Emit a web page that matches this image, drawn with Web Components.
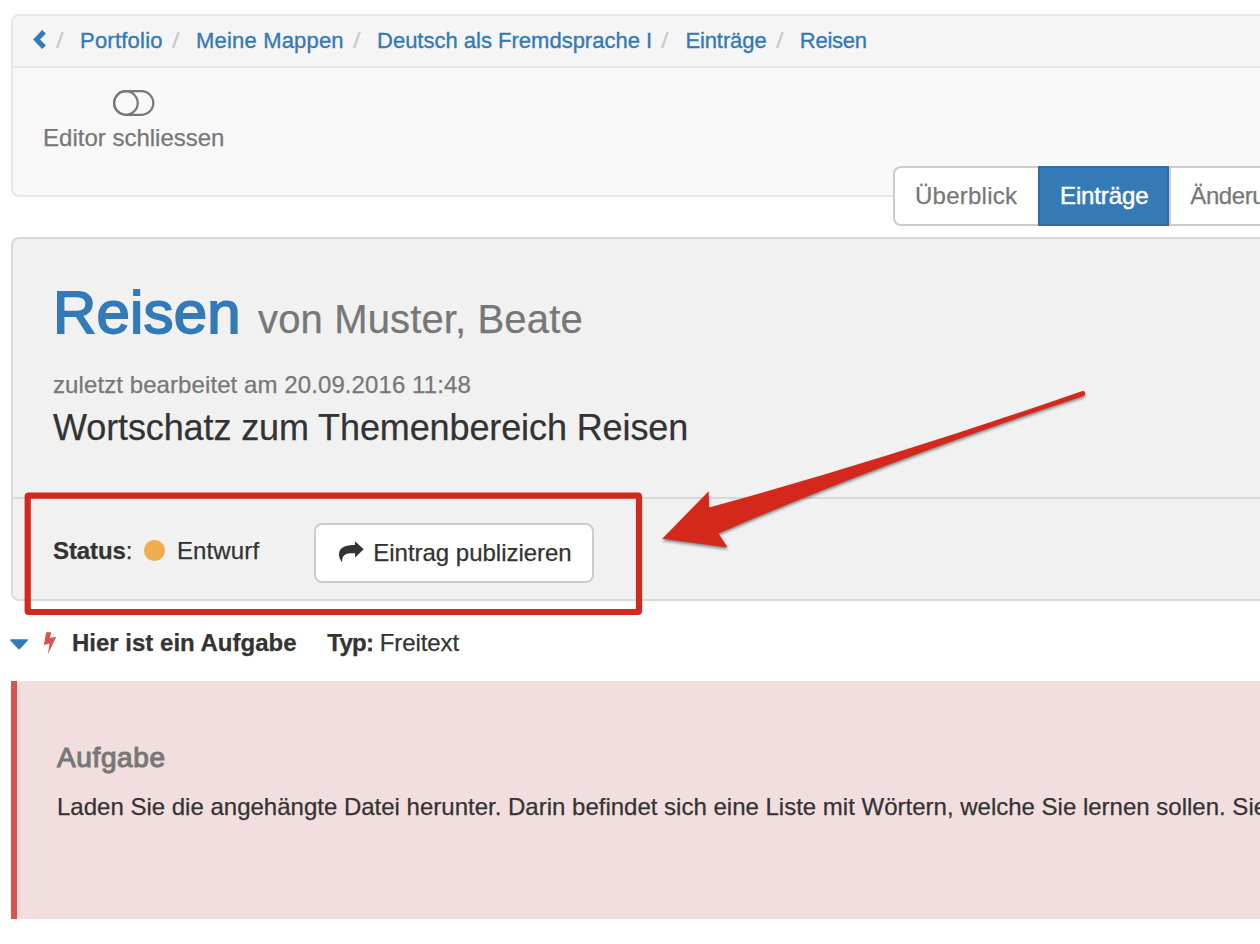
<!DOCTYPE html>
<html lang="de">
<head>
<meta charset="utf-8">
<title>Reisen</title>
<style>
html,body{margin:0;width:1260px;height:944px;overflow:hidden;background:#fff}
body{font:24px/34px "Liberation Sans",Arial,sans-serif;color:#333;position:relative;-webkit-text-stroke:.25px}
</style>
</head>
<body>
<portfolio-page></portfolio-page>
<script>
const define = (name, html) => {
  const tpl = document.createElement('template');
  tpl.innerHTML = html;
  customElements.define(name, class extends HTMLElement {
    constructor() {
      super();
      this.attachShadow({ mode: 'open' }).append(tpl.content.cloneNode(true));
    }
  });
};

define('crumb-link', `
<style>
:host{display:flex;white-space:nowrap}
i{font-style:normal;color:#ccc;width:24px;margin-left:9.25px}
i span{display:inline-block;transform:scaleX(1.25);transform-origin:0 50%}
a{color:#337ab7;-webkit-text-stroke:.35px #337ab7}
</style><i><span>/</span></i><a><slot></slot></a>`);

define('crumb-bar', `
<style>
:host{display:flex;box-sizing:border-box;height:52px;line-height:48px;padding:1px 0 0 20px;font-size:22px;background:#f5f5f5;border-bottom:2px solid #e7e7e7;border-radius:6px 0 0 0}
svg{margin-top:12px;margin-right:.75px;flex:none}
</style>
<svg width="13" height="21" viewBox="0 0 13 21"><path d="M.3 10.5 9.2 1.2 12.6 4.6 6.9 10.5 12.6 16.4 9.2 19.8Z" fill="#337ab7" stroke="#337ab7" stroke-width=".5" stroke-linejoin="round"/></svg>
<slot></slot>`);

define('editor-toggle', `
<style>
:host{display:flex;flex-direction:column;align-items:center;width:181.5px;padding:22px 0 0 30px;color:#777;white-space:nowrap}
svg{display:block;margin-bottom:5px}
</style>
<svg width="42" height="26" viewBox="0 0 42 26" fill="none" stroke="#777" stroke-width="2.2"><rect x="1.1" y="1.2" width="39.2" height="23.6" rx="11.8"/><circle cx="12.9" cy="13" r="11.8"/></svg>
<span><slot></slot></span>`);

define('tool-panel', `
<style>
:host{display:block;box-sizing:border-box;margin:14px 0 0 11px;width:1300px;height:183px;border:2px solid #e7e7e7;border-radius:8px;background:#f8f8f8}
</style><slot></slot>`);

define('tab-item', `
<style>
:host{display:block;box-sizing:border-box;height:60px;line-height:56px;border:2px solid #ccc;border-right:0;padding-left:20px;background:#fff;color:#777;white-space:nowrap}
:host([first]){width:145px;border-radius:8px 0 0 8px;letter-spacing:.25px}
:host([active]){width:131px;background:#337ab7;border:2px solid #2e6da4;color:#fff;letter-spacing:-.13px;-webkit-text-stroke:.5px #fff}
:host([last]){width:180px;padding-left:19.3px;letter-spacing:-.4px}
</style><slot></slot>`);

define('tab-group', `
<style>:host{display:flex;position:relative;margin:-31px 0 0 893px;width:460px}</style><slot></slot>`);

define('entry-heading', `
<style>
:host{display:block;padding:40px 0 44px 40px;white-space:nowrap;border-bottom:2px solid #d9d9d9}
h1{display:flex;align-items:baseline;margin:0;height:68px;font-weight:400;font-size:60px;line-height:68px}
.t{color:#337ab7;letter-spacing:.15px;-webkit-text-stroke:1.8px #337ab7;width:205px}
small{font-size:40px;color:#777;letter-spacing:.14px}
.d{margin-top:21px;color:#777;letter-spacing:.087px}
.s{margin-top:1px;font-size:36px;line-height:50px;letter-spacing:-.11px}
</style>
<h1><span class="t"><slot name="title"></slot></span><small><slot name="author"></slot></small></h1>
<div class="d"><slot name="date"></slot></div>
<div class="s"><slot name="summary"></slot></div>`);

define('publish-button', `
<style>
:host{display:flex;align-items:center;box-sizing:border-box;width:280px;height:60px;border:2px solid #ccc;border-radius:8px;background:#fff;padding-left:23px;white-space:nowrap;letter-spacing:-.02px}
svg{margin:-3px 9.3px 0 0;flex:none}
</style>
<svg width="25" height="22" viewBox="0 0 25 22"><path d="M16 .2 24.7 8.3 16 16.5V12.3C8 12 2.6 12.8 3.2 21.2 1.5 19.5 0 16.5 0 13.5 0 6 7 4 16 4Z" fill="#333"/></svg>
<span><slot></slot></span>`);

define('status-row', `
<style>
:host{display:flex;align-items:flex-start;height:100px;box-sizing:border-box;padding:24px 0 0 40px;white-space:nowrap}
.l{margin-top:11px;width:91.3px}
b{letter-spacing:-.1px}
i{width:20.7px;height:20.7px;border-radius:50%;background:#f0ad4e;margin:17.2px 12px 0 0}
.v{margin-top:11px;width:137px;letter-spacing:.12px}
</style>
<div class="l"><b><slot name="label"></slot></b>:</div><i></i><div class="v"><slot name="value"></slot></div><slot></slot>`);

define('entry-panel', `
<style>:host{display:block;box-sizing:border-box;margin:11px 0 0 11px;width:1300px;height:364px;border:2px solid #d9d9d9;border-radius:8px;background:#f1f1f1}</style><slot></slot>`);

define('task-title', `
<style>
:host{display:flex;margin:25px 0 0 10px;height:34px;white-space:nowrap}
svg{flex:none}
.n{width:255.3px}
.t{letter-spacing:-.7px;width:52.4px}
.v{letter-spacing:-.07px}
</style>
<svg width="62" height="34" viewBox="0 0 62 34"><path d="M1 13.3H17.2Q18.6 13.3 17.6 14.7L10.3 22.7Q9.2 23.9 8 22.7L.5 14.7Q-.4 13.3 1 13.3Z" fill="#337ab7"/><path d="M36.2 6.2H41.3L39.8 11.8 46.2 10.9 37.7 28.6 39.7 17.6 33.9 18.9Z" fill="#d9534f"/></svg>
<b class="n"><slot></slot></b><b class="t"><slot name="key"></slot></b><span class="v"><slot name="type"></slot></span>`);

define('task-callout', `
<style>
:host{display:block;box-sizing:border-box;margin:21px 0 0 11px;width:1300px;height:238px;border-left:6px solid #d9534f;background:#f2dede;padding:57px 0 0 40px;white-space:nowrap}
h4{margin:0 0 12px;font-weight:400;font-size:28px;line-height:40px;color:#777;letter-spacing:.62px;-webkit-text-stroke:1.1px #777}
p{margin:0}
</style><h4><slot name="title"></slot></h4><p><slot></slot></p>`);

/* Highlight frame and pointer lying over the page */
define('mark-overlay', `
<style>:host{position:absolute;left:0;top:0;width:1260px;height:944px}svg{display:block;filter:drop-shadow(0 2px 1.5px rgba(0,0,0,.45))}svg.f{position:absolute;left:0;top:0;filter:none}</style>
<svg class="f" width="1260" height="944" fill="none"><rect x="27.7" y="495.7" width="611.3" height="116.3" rx="1" stroke="#d3281b" stroke-width="6.2"/></svg>
<svg width="1260" height="944"><path d="M662.3 538.7 708.7 491.2 709 507.6 Q890 458 1082.5 391 C1085.5 390.6 1086.3 394.5 1083.5 396 Q880 463 718.5 533.6L727.7 547.4Z" fill="#d3281b"/></svg>`);

define('portfolio-page', `
<style>:host{display:flow-root;width:1260px;height:944px;overflow:hidden}</style>
<tool-panel>
  <crumb-bar><crumb-link style="letter-spacing:.229px">Portfolio</crumb-link><crumb-link style="letter-spacing:.182px">Meine Mappen</crumb-link><crumb-link>Deutsch als Fremdsprache I</crumb-link><crumb-link style="letter-spacing:-.1px">Einträge</crumb-link><crumb-link style="letter-spacing:-.25px">Reisen</crumb-link></crumb-bar>
  <editor-toggle>Editor schliessen</editor-toggle>
</tool-panel>
<tab-group><tab-item first>Überblick</tab-item><tab-item active>Einträge</tab-item><tab-item last>Änderungen</tab-item></tab-group>
<entry-panel>
  <entry-heading><span slot="title">Reisen</span><span slot="author">von Muster, Beate</span><span slot="date">zuletzt bearbeitet am 20.09.2016 11:48</span><span slot="summary">Wortschatz zum Themenbereich Reisen</span></entry-heading>
  <status-row><span slot="label">Status</span><span slot="value">Entwurf</span><publish-button>Eintrag publizieren</publish-button></status-row>
</entry-panel>
<task-title>Hier ist ein Aufgabe<span slot="key">Typ:</span><span slot="type">Freitext</span></task-title>
<task-callout><span slot="title">Aufgabe</span>Laden Sie die angehängte Datei herunter. Darin befindet sich eine Liste mit Wörtern, welche Sie lernen sollen. Sie</task-callout>
<mark-overlay></mark-overlay>`);
</script>
</body>
</html>
